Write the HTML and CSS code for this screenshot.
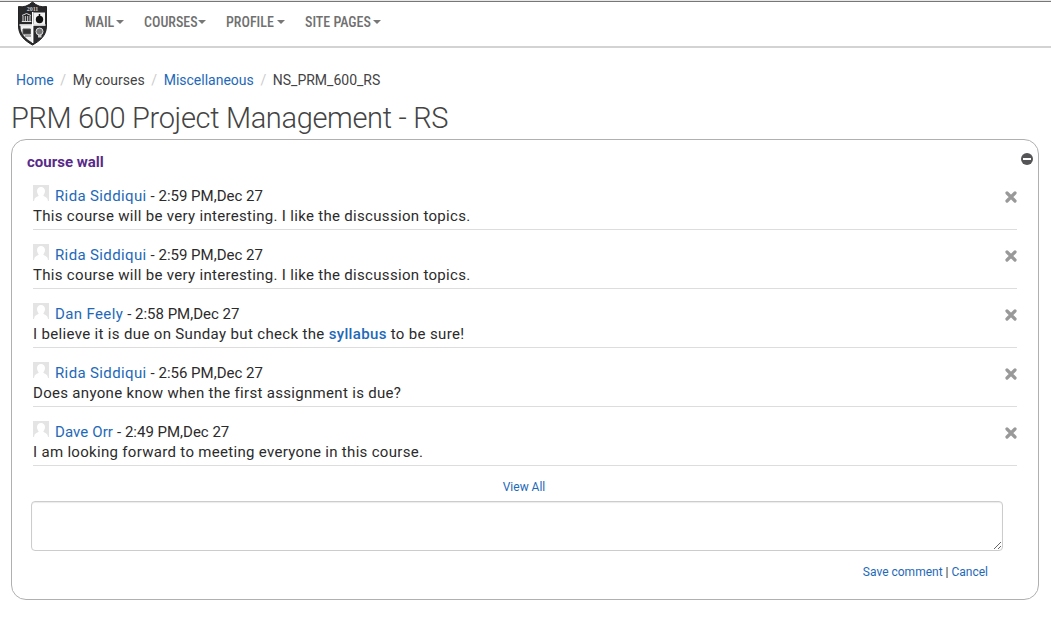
FILE: index.html
```html
<!DOCTYPE html>
<html lang="en">
<head>
<meta charset="utf-8">
<title>PRM 600 Project Management - RS</title>
<link rel="stylesheet" href="styles.css">
</head>
<body>
<svg class="defs" width="0" height="0">
  <symbol id="avatar" viewBox="0 0 16 16">
    <rect width="16" height="16" fill="#e4e4e4"/>
    <path d="M8 2C5.500 2 4 3.700 4 6c0 1.500.7 3.300 1.700 4.300C5.600 11.600 2.300 12 1.500 14L1 16h14l-.5-2c-.8-2-4.100-2.400-4.200-3.700C11.300 9.300 12 7.500 12 6c0-2.300-1.500-4-4-4z" fill="#fff"/>
  </symbol>
  <symbol id="cross" viewBox="0 0 12 12">
    <path d="M2 2l8 8M10 2l-8 8" stroke="#999" stroke-width="3.200" stroke-linecap="round"/>
  </symbol>
</svg>
<header class="navbar">
  <svg class="logo" viewBox="0 0 32 45" width="32" height="45">
    <path d="M1.500 5.500Q9 7 15.500 1Q22 7 29.500 5.500V25c0 10-7 15-14 19C8.500 40 1.500 35 1.500 25z" fill="#29292c" stroke="#222" stroke-width="1"/>
    <path d="M16.500 11.500h11.500v12H16.500zM3.500 24.500H15v17C9 37.500 3.500 33 3.500 26z" fill="#f2f2f2"/>
    <path d="M2.500 24H28.500M15.700 11v31" stroke="#fff" stroke-width="1.400"/>
    <path d="M5 14.500l4.500-2 4.500 2M6 15v5M8.300 15v5M10.700 15v5M13 15v5M4.800 20.500h9.500" stroke="#ddd" fill="none"/>
    <circle cx="22.500" cy="18.500" r="3.700" fill="#111"/><path d="M22.500 16v-3" stroke="#111" stroke-width="1.500"/>
    <path d="M6 28h7.500v5H6zM8 35h6" fill="#333" stroke="#555"/>
    <circle cx="22.500" cy="30.500" r="3.500" fill="#777" stroke="#ddd"/><path d="M21 34h3.500v2.500H21z" fill="#ccc"/>
    <text class="logo-year" x="15.500" y="10" text-anchor="middle">2011</text>
  </svg>
  <nav class="menu">
    <a class="mail">MAIL<i></i></a>
    <a class="courses">COURSES<i></i></a>
    <a class="profile">PROFILE<i></i></a>
    <a class="pages">SITE PAGES<i></i></a>
  </nav>
</header>
<div class="breadcrumb"><a>Home</a><b>/</b><span>My courses</span><b>/</b><a>Miscellaneous</a><b>/</b><span>NS_PRM_600_RS</span></div>
<h1>PRM 600 Project Management - RS</h1>
<main class="wall">
  <div class="wall-head">
    <h2>course wall</h2>
    <svg width="12" height="12" viewBox="0 0 12 12"><circle cx="6" cy="6" r="6" fill="#555558"/><path d="M2 6h8" stroke="#fff" stroke-width="2"/></svg>
  </div>
  <div class="posts">
    <article class="post"><div><p class="by"><svg class="avatar"><use href="#avatar"/></svg><a>Rida Siddiqui</a> <span>- 2:59 PM,Dec 27</span></p><p class="msg">This course will be very interesting. I like the discussion topics.</p></div><svg class="close"><use href="#cross"/></svg></article>
    <article class="post"><div><p class="by"><svg class="avatar"><use href="#avatar"/></svg><a>Rida Siddiqui</a> <span>- 2:59 PM,Dec 27</span></p><p class="msg">This course will be very interesting. I like the discussion topics.</p></div><svg class="close"><use href="#cross"/></svg></article>
    <article class="post"><div><p class="by"><svg class="avatar"><use href="#avatar"/></svg><a>Dan Feely</a> <span>- 2:58 PM,Dec 27</span></p><p class="msg wide">I believe it is due on Sunday but check the <a class="term">syllabus</a> to be sure!</p></div><svg class="close"><use href="#cross"/></svg></article>
    <article class="post"><div><p class="by"><svg class="avatar"><use href="#avatar"/></svg><a>Rida Siddiqui</a> <span>- 2:56 PM,Dec 27</span></p><p class="msg">Does anyone know when the first assignment is due?</p></div><svg class="close"><use href="#cross"/></svg></article>
    <article class="post"><div><p class="by tight"><svg class="avatar"><use href="#avatar"/></svg><a>Dave Orr</a> <span>- 2:49 PM,Dec 27</span></p><p class="msg">I am looking forward to meeting everyone in this course.</p></div><svg class="close"><use href="#cross"/></svg></article>
  </div>
  <a class="view-all">View All</a>
  <textarea class="comment"></textarea>
  <div class="actions"><a>Save comment</a> | <a>Cancel</a></div>
</main>
</body>
</html>
```

FILE: styles.css
```css
* { box-sizing: border-box; }
body { margin: 0; background: #fff; color: #2b2b2b; font-family: Roboto, "Liberation Sans", sans-serif; }
p, h1, h2 { margin: 0; }
a { color: #1e69b8; text-decoration: none; }
.defs { display: none; }

.navbar { height: 48px; padding-left: 17px; display: flex; border-top: 1px solid #e8e8e8; border-bottom: 2px solid #d3d3d3; box-shadow: inset 0 1px #777; }
.logo { display: block; flex: none; }
.logo-year { font: bold 6px "Liberation Serif", serif; fill: #ccc; }
.menu { display: flex; align-items: flex-start; padding: 12px 0 0 36px; font: 500 14px/18px "Roboto Condensed", Roboto, sans-serif; font-stretch: condensed; }
.menu a { display: flex; color: #707070; white-space: nowrap; align-items: center; justify-content: space-between; }
.menu i { border: 4px solid transparent; border-top-color: #777; border-bottom: 0; }
.mail { width: 39px; margin-right: 20px; }
.courses { width: 62px; margin-right: 20px; }
.profile { width: 59px; margin-right: 20px; }
.pages { width: 76px; }

.breadcrumb { display: flex; padding: 22px 0 0 16px; font-size: 14px; line-height: 20px; color: #444; }
.breadcrumb b { width: 19px; padding: 0 2px; text-align: center; font-weight: 400; color: #ccc; }
h1 { padding-left: 11px; margin-top: 9px; font-size: 29px; line-height: 38px; font-weight: 300; color: #444; white-space: nowrap; letter-spacing: -.34px; }

.wall { display: flex; flex-direction: column; width: 1028px; height: 461px; margin: 2px 0 0 11px; border: 1px solid #b0b0b0; border-radius: 15px; }
.wall-head { display: flex; justify-content: space-between; padding: 13px 5px 0 15px; height: 40px; }
h2 { font-size: 15px; line-height: 18px; color: #592a8a; }
.posts { padding: 0 21px; }
.post { display: flex; justify-content: space-between; height: 59px; padding-top: 15px; border-bottom: 1px solid #ddd; font-size: 15px; line-height: 20px; letter-spacing: .31px; }
.post:first-child { height: 50px; padding-top: 6px; }
.by { display: flex; white-space: pre; }
.by a { letter-spacing: .37px; }
.by span { margin-left: 4px; letter-spacing: 0; }
.tight a { letter-spacing: .1px; }
.avatar { width: 16px; height: 16px; margin: -1px 6px 0 0; }
.close { width: 12px; height: 12px; margin-top: 5px; }
.wide { letter-spacing: .34px; }
.term { font-weight: 500; }
.view-all { align-self: center; margin: 12px 2px 5px 0; font-size: 12px; line-height: 18px; }
.comment { flex: none; width: 972px; height: 50px; margin-left: 19px; border: 1px solid #ccc; border-radius: 4px; background: #fff; box-shadow: inset 0 1px 1px rgba(0,0,0,.08); resize: vertical; }
.actions { padding: 12px 50px 0 0; text-align: right; font-size: 12px; line-height: 18px; }
```
